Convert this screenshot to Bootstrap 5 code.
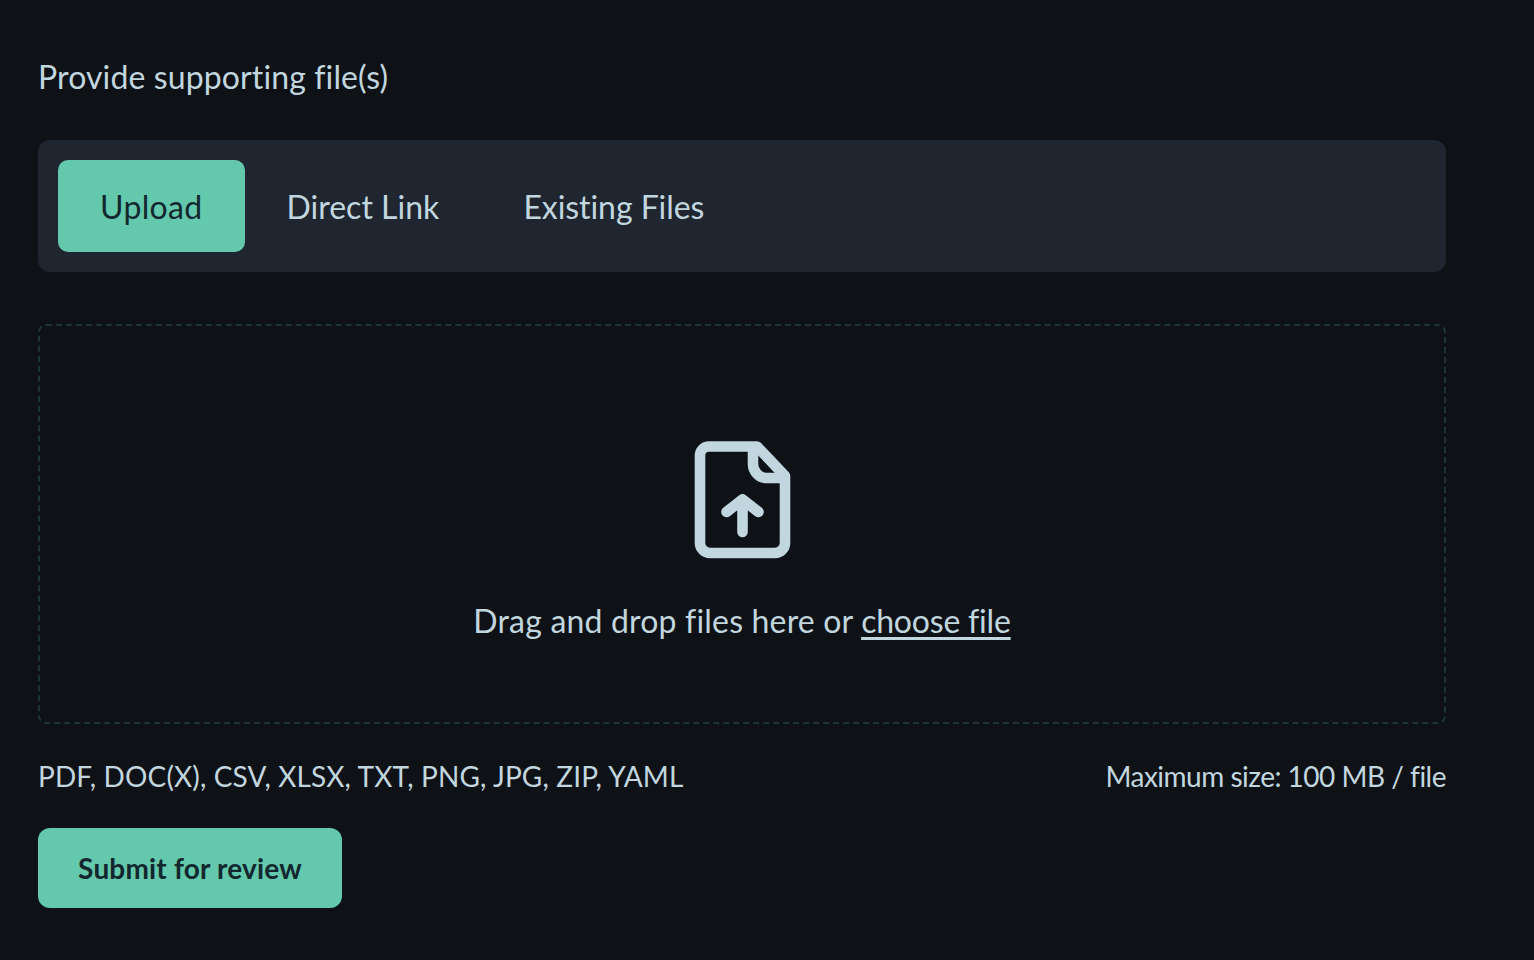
<!doctype html>
<html lang="en">
<head>
<meta charset="utf-8">
<title>Provide supporting files</title>
<link href="https://cdn.jsdelivr.net/npm/bootstrap@5.3.0/dist/css/bootstrap.min.css" rel="stylesheet">
<style>
html,body{height:100%;overflow:hidden}
body{background:#0e1217;color:#c2d6df;font-family:"Lato","Noto Sans",sans-serif;font-size:32px;line-height:1.5}
.page-wrap{width:1408px;margin-left:38px;padding-top:53px}
.field-title{font-size:32px;line-height:48px;margin:0 0 39px;color:#c2d6df;letter-spacing:.12px}
.tab-bar{background:#1f2630;border-radius:12px;padding:20px;height:132px;margin-bottom:52px}
.tab-item{height:92px;padding:2px 42px 0;border:0;background:transparent;color:#c2d6df;font-size:32px;border-radius:10px;letter-spacing:.01px}
.tab-item.on{background:#64c9ac;color:#12272e;letter-spacing:.33px}
.tab-item.tight{letter-spacing:-.06px}
.tab-item:hover{color:#c2d6df}
.tab-item.on:hover{background:#64c9ac;color:#12272e}
.drop-area{height:400px;border:2px dashed #1d3633;border-radius:8px;padding-top:36px}
.drop-text{font-size:32px;line-height:48px;margin-top:37px;letter-spacing:.18px}
.drop-text a{color:inherit;text-underline-offset:4px;letter-spacing:-.2px}
.meta-row{font-size:28px;line-height:42px;margin-top:31px}
.meta-left{letter-spacing:.13px}
.meta-right{letter-spacing:-.5px}
.send-btn{margin-top:31px;width:304px;height:80px;background:#64c9ac;color:#12272e;border:0;border-radius:12px;font-size:28px;font-weight:700;letter-spacing:.18px}
.send-btn:hover{background:#64c9ac;color:#12272e}
</style>
</head>
<body>
<div class="page-wrap">
  <p class="field-title">Provide supporting file(s)</p>
  <div class="tab-bar d-flex">
    <button class="tab-item on btn">Upload</button>
    <button class="tab-item btn">Direct Link</button>
    <button class="tab-item tight btn">Existing Files</button>
  </div>
  <div class="drop-area d-flex flex-column align-items-center justify-content-center">
    <svg width="98" height="120" viewBox="-1 0 98 120" fill="none" stroke="#c2d6df" stroke-width="10.6" stroke-linecap="round" stroke-linejoin="round" aria-hidden="true">
      <path d="M15 6.5H63L91 36V103a10 10 0 0 1-10 10H16a10 10 0 0 1-10-10V15.5a9 9 0 0 1 9-9z"/>
      <path d="M59 8V24a14 14 0 0 0 14 14H90"/>
      <path d="M48.5 92V60M32.5 72l16-12.5 16 12.5"/>
    </svg>
    <div class="drop-text">Drag and drop files here or <a href="#">choose file</a></div>
  </div>
  <div class="meta-row d-flex justify-content-between">
    <span class="meta-left">PDF, DOC(X), CSV, XLSX, TXT, PNG, JPG, ZIP, YAML</span>
    <span class="meta-right">Maximum size: 100 MB / file</span>
  </div>
  <button class="send-btn btn d-block">Submit for review</button>
</div>
</body>
</html>
